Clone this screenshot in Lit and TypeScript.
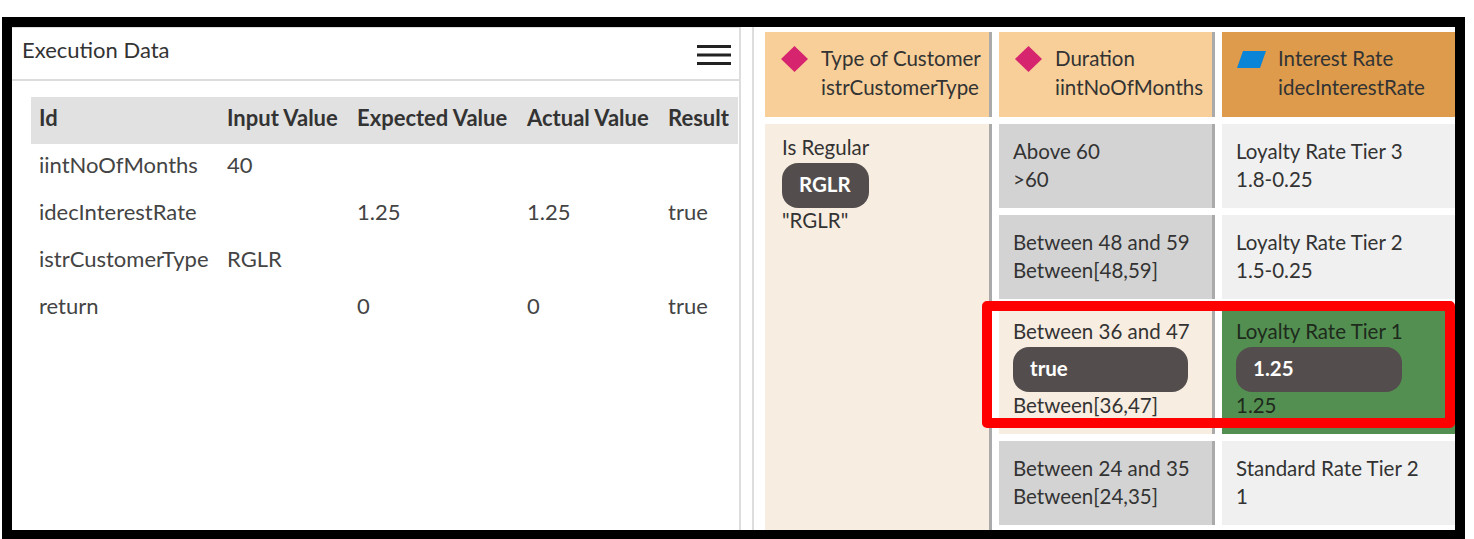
import { LitElement, html, css } from "lit";
import { customElement } from "lit/decorators.js";

const columns = ["Id", "Input Value", "Expected Value", "Actual Value", "Result"];
const rows = [
  ["iintNoOfMonths", "40", "", "", ""],
  ["idecInterestRate", "", "1.25", "1.25", "true"],
  ["istrCustomerType", "RGLR", "", "", ""],
  ["return", "", "0", "0", "true"],
];

const decisions = [
  { label: "Above 60", expr: ">60", result: "Loyalty Rate Tier 3", value: "1.8-0.25" },
  { label: "Between 48 and 59", expr: "Between[48,59]", result: "Loyalty Rate Tier 2", value: "1.5-0.25" },
  { label: "Between 36 and 47", expr: "Between[36,47]", result: "Loyalty Rate Tier 1", value: "1.25", hit: "true", out: "1.25" },
  { label: "Between 24 and 35", expr: "Between[24,35]", result: "Standard Rate Tier 2", value: "1" },
];

@customElement("app-root")
export class AppRoot extends LitElement {
  static styles = css`
    :host {
      display: block;
      position: relative;
      width: 1474px;
      height: 539px;
      background: #fff;
      font-family: Lato, "Open Sans", sans-serif;
      font-size: 20.5px;
      color: #333;
      overflow: hidden;
    }

    .frame {
      box-sizing: border-box;
      position: absolute;
      left: 2px;
      top: 17px;
      width: 1463px;
      height: 522px;
      border: solid #000;
      border-width: 10px 10px 9px;
      display: flex;
      background: #fff;
      overflow: hidden;
    }

    .left {
      box-sizing: border-box;
      flex: 0 0 729px;
      border-top: 1px solid #ddd;
      border-right: 2px solid #ddd;
      font-size: 22px;
      color: #444;
    }

    .left-head {
      box-sizing: border-box;
      height: 53px;
      padding: 0 8px 9px 10px;
      border-bottom: 2px solid #ddd;
      display: flex;
      align-items: center;
      justify-content: space-between;
      color: #333;
    }

    .left-head svg {
      display: block;
      margin-top: 11px;
    }

    .table {
      margin: 16px 0 0 19px;
      width: 707px;
      display: grid;
      grid-template-columns: 188px 130px 170px 141px 78px;
      grid-auto-rows: 47px;
      align-items: center;
    }

    .table span {
      padding: 0 0 7px 8px;
      white-space: nowrap;
    }

    .table .th {
      box-sizing: border-box;
      align-self: stretch;
      display: flex;
      align-items: center;
      background: #e1e1e1;
      font-weight: 700;
      color: #333;
    }

    .right {
      flex: 1;
      min-width: 0;
      margin-left: 11px;
      border-left: 2px solid #ddd;
      padding: 5px 0 0 11px;
      display: grid;
      grid-template-columns: 227px 216px 233px;
      grid-template-rows: 85px 84px 84px 128px 84px 40px;
      gap: 7px;
      line-height: 28px;
    }

    .cell {
      box-sizing: border-box;
      padding: 13px 14px 0;
      white-space: nowrap;
    }

    .edge {
      border-right: 3px solid #aaa;
    }

    .head {
      background: #f8cf99;
      display: flex;
      align-items: flex-start;
      padding: 12px 0 0 16px;
      line-height: 29px;
    }

    .head.out {
      background: #dd9b4b;
      padding-left: 15px;
    }

    .head svg {
      flex: none;
      margin: 2px 13px 0 0;
    }

    .head.out svg {
      margin: 7px 12px 0 0;
    }

    .given {
      grid-row: 2 / span 5;
      background: #f8ede1;
      padding: 9px 17px 0;
    }

    .cond {
      background: #d3d3d3;
    }

    .res {
      background: #f0f0f0;
    }

    .cond.hit {
      background: #f8ede1;
      padding-top: 11px;
    }

    .res.hit {
      background: #548f52;
      color: #1d2a1c;
      padding-top: 11px;
    }

    .chip {
      box-sizing: border-box;
      width: 175px;
      height: 45px;
      margin: 2px 0 -1px;
      padding: 0 17px 4px;
      border-radius: 16px;
      background: #534e4d;
      color: #fff;
      font-weight: 700;
      display: flex;
      align-items: center;
    }

    .given .chip {
      width: 87px;
      margin-bottom: -2px;
    }

    .res .chip {
      width: 166px;
    }

    .highlight {
      box-sizing: border-box;
      position: absolute;
      left: 982px;
      top: 301px;
      width: 473px;
      height: 127px;
      border: 10px solid #f00;
      border-radius: 5px;
    }
  `;

  private diamond() {
    return html`<svg width="27" height="26" viewBox="0 0 27 26">
      <path d="M13.5 0 27 13 13.5 26 0 13Z" fill="#d6246e"></path>
    </svg>`;
  }

  render() {
    return html`
      <div class="frame">
        <section class="left">
          <div class="left-head">
            <span>Execution Data</span>
            <svg width="34" height="20" viewBox="0 0 34 20">
              <path d="M0 1.5h34M0 10h34M0 18.5h34" stroke="#222" stroke-width="3"></path>
            </svg>
          </div>
          <div class="table">
            ${columns.map((c) => html`<span class="th">${c}</span>`)}
            ${rows.map((r) => r.map((v) => html`<span>${v}</span>`))}
          </div>
        </section>
        <section class="right">
          <div class="cell head edge">
            ${this.diamond()}
            <div>Type of Customer<br />istrCustomerType</div>
          </div>
          <div class="cell head edge">
            ${this.diamond()}
            <div>Duration<br />iintNoOfMonths</div>
          </div>
          <div class="cell head out">
            <svg width="29" height="17" viewBox="0 0 29 17">
              <path d="M6 0H29L23 17H0Z" fill="#0a84d6"></path>
            </svg>
            <div>Interest Rate<br />idecInterestRate</div>
          </div>
          <div class="cell given edge">
            Is Regular
            <div class="chip">RGLR</div>
            "RGLR"
          </div>
          ${decisions.map(
            (d) => html`
              <div class="cell cond edge ${d.hit ? "hit" : ""}">
                ${d.label}
                ${d.hit ? html`<div class="chip">${d.hit}</div>` : ""}
                <div>${d.expr}</div>
              </div>
              <div class="cell res ${d.hit ? "hit" : ""}">
                ${d.result}
                ${d.out ? html`<div class="chip">${d.out}</div>` : ""}
                <div>${d.value}</div>
              </div>
            `
          )}
        </section>
      </div>
      <div class="highlight"></div>
    `;
  }
}
